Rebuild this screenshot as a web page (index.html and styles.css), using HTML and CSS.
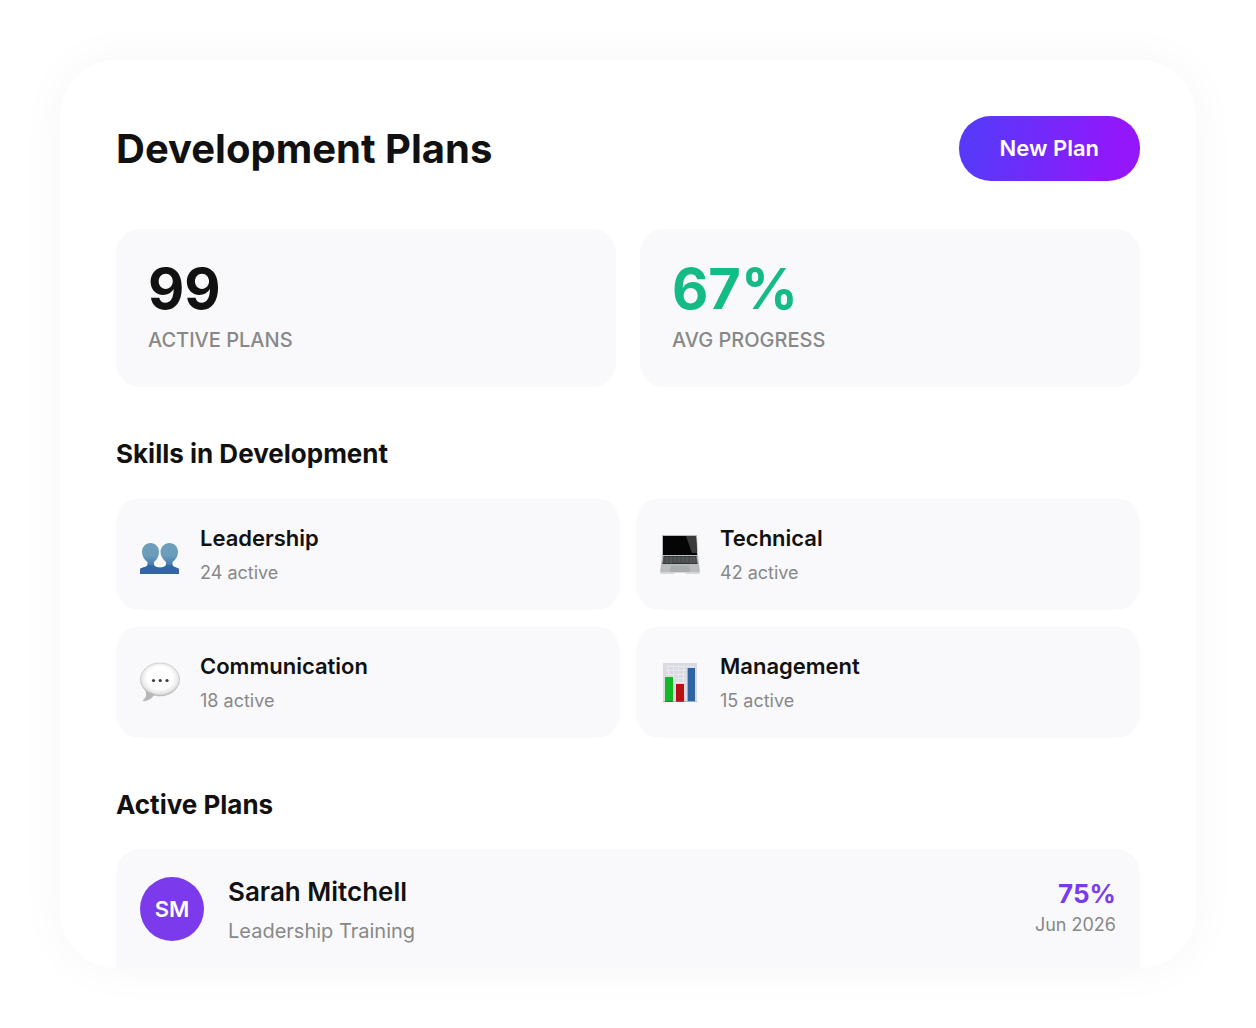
FILE: index.html
```
<!DOCTYPE html>
<html lang="en">
<head>
    <meta charset="UTF-8">
    <meta name="viewport" content="width=device-width, initial-scale=1.0">
    <title>Development Plans</title>
    <link rel="stylesheet" href="styles.css">
</head>
<body>
    <main class="panel">
        <header class="panel-header">
            <h1>Development Plans</h1>
            <button type="button" class="new-plan">New Plan</button>
        </header>

        <section class="stats">
            <div class="stat">
                <div class="stat-value">99</div>
                <div class="stat-label">Active Plans</div>
            </div>
            <div class="stat">
                <div class="stat-value green">67%</div>
                <div class="stat-label">Avg Progress</div>
            </div>
        </section>

        <section>
            <h2>Skills in Development</h2>
            <div class="skills">
                <div class="skill">
                    <svg class="skill-icon" viewBox="0 0 40 42" aria-hidden="true">
                        <defs>
                            <linearGradient id="person" x1="0" y1="0" x2="0" y2="1">
                                <stop offset="0.4" stop-color="#6c9dba"/>
                                <stop offset="0.75" stop-color="#3f78b0"/>
                                <stop offset="1" stop-color="#466995"/>
                            </linearGradient>
                        </defs>
                        <path fill="url(#person)" d="M0 41v-4c0-1 .5-1.600 1.500-2 3-1 6-1.500 6-3.500v-2.500C4 26.500 2 23 2 19 2 14 5.500 10 10.500 10S19 14 19 19c0 4-2 7.500-5 10v2.500c0 2 3 3 6 3 3 0 6-1 6-3V29c-3-2.500-5.500-6-5.500-10 0-5 4-9 9-9s8.500 4 8.500 9c0 4-2 7.500-5.500 10v2.500c0 2 2.500 2.500 5 3.500 1 .4 1.500 1 1.500 2v4z"/>
                        <path fill="#2d62a2" d="M0 41v-4c0-1 .5-1.600 1.500-2 3-1 6-1.500 6-3.500 2 1 4.500 1 6.500 0 0 2 3 3 6 3s6-1 6-3c2 1 4.500 1 6.500 0 0 2 2.500 2.500 5 3.500 1 .4 1.500 1 1.500 2v4z" opacity=".7"/>
                    </svg>
                    <div>
                        <div class="skill-name">Leadership</div>
                        <div class="skill-count">24 active</div>
                    </div>
                </div>
                <div class="skill">
                    <svg class="skill-icon" viewBox="0 0 40 42" aria-hidden="true">
                        <path fill="#b9bcbd" d="M2 2h35l1 20H2z"/>
                        <path fill="#050505" d="M3 3h33l1 19H3z"/>
                        <path fill="#3b3b3b" d="M26 3h10l1 17h-5z"/>
                        <path fill="#b9bdbd" d="M2 22h36l2 17.500H0z"/>
                        <path fill="#303132" d="M3.500 23h33l1 8h-35z"/>
                        <path stroke="#8b8e8f" stroke-width=".6" d="M3 25h34M3 27h34.500M3 29h34.500"/>
                        <path stroke="#707475" stroke-width=".5" d="M7 23v8M11 23v8M15 23v6M19 23v6M23 23v6M27 23v6M31 23v8M34 23v8"/>
                        <path fill="#a9adad" d="M11 32.500h18l1 6.500H10z"/>
                        <path fill="#d4d8d8" d="M0 39h40v1l-1 1H26l-1-1H15l-1 1H1l-1-1z"/>
                    </svg>
                    <div>
                        <div class="skill-name">Technical</div>
                        <div class="skill-count">42 active</div>
                    </div>
                </div>
                <div class="skill">
                    <svg class="skill-icon" viewBox="0 0 40 42" aria-hidden="true">
                        <defs>
                            <radialGradient id="bubble" cx=".5" cy=".45" r=".56">
                                <stop offset="0.6" stop-color="#ffffff"/>
                                <stop offset="0.85" stop-color="#e6e6e7"/>
                                <stop offset="1" stop-color="#acaead"/>
                            </radialGradient>
                        </defs>
                        <ellipse cx="20" cy="18.500" rx="19.500" ry="16.500" fill="url(#bubble)" stroke="#b8b9b9" stroke-width=".6"/>
                        <path fill="#b5b8b7" d="M5.500 30c1.500 4 .5 7-2.500 9-.5.6 0 1.200 1 1.200 4-.2 8.500-3 10.500-6.700z"/>
                        <circle cx="13.500" cy="19.500" r="1.600" fill="#3d3d3d"/>
                        <circle cx="20.200" cy="19.500" r="1.600" fill="#3d3d3d"/>
                        <circle cx="27" cy="19.500" r="1.600" fill="#3d3d3d"/>
                    </svg>
                    <div>
                        <div class="skill-name">Communication</div>
                        <div class="skill-count">18 active</div>
                    </div>
                </div>
                <div class="skill">
                    <svg class="skill-icon" viewBox="0 0 40 42" aria-hidden="true">
                        <path fill="#dadbe2" d="M3 2h34v39H3z"/>
                        <path stroke="#e8e8ee" d="M6 5.500h28M6 9.500h20M6 13.500h20M14 17.500h12M14 21.500h12M8.500 4v10M13.500 4v18M18.500 4v18M23.500 4v18"/>
                        <path fill="#b4b5bd" d="M3 40h34v1H3z"/>
                        <path fill="#12b924" d="M5 16h8v24H5z"/>
                        <path fill="#b71111" d="M16 23h8v17h-8z"/>
                        <path fill="#8fb2cf" d="M27 7h8v34h-8z"/>
                        <path fill="#2e64a4" d="M28 7h7v33h-7z"/>
                        <path fill="#59625e" d="M5 40h8v1H5zM16 40h8v1h-8z"/>
                    </svg>
                    <div>
                        <div class="skill-name">Management</div>
                        <div class="skill-count">15 active</div>
                    </div>
                </div>
            </div>
        </section>

        <section>
            <h2>Active Plans</h2>
            <div class="plan">
                <div class="avatar">SM</div>
                <div class="plan-info">
                    <div class="plan-name">Sarah Mitchell</div>
                    <div class="plan-type">Leadership Training</div>
                </div>
                <div class="plan-status">
                    <div class="plan-percent">75%</div>
                    <div class="plan-date">Jun 2026</div>
                </div>
            </div>
        </section>
    </main>
</body>
</html>
```
FILE: styles.css
```
* {
    box-sizing: border-box;
}
body {
    margin: 0;
    padding: 60px;
    height: 100vh;
    font-family: Inter, "Liberation Sans", sans-serif;
    color: #111;
    background: #fff;
}
.panel {
    height: 100%;
    padding: 56px 56px 0;
    overflow: hidden;
    background: #fff;
    border-radius: 56px;
    box-shadow: 0 0 48px rgba(0, 0, 0, 0.04);
}
.panel-header {
    display: flex;
    justify-content: space-between;
    align-items: center;
    margin-bottom: 48px;
}
h1 {
    margin: 0;
    font-size: 40px;
    line-height: 48px;
    font-weight: 700;
}
h2 {
    margin: 48px 0 25px;
    font-size: 26px;
    line-height: 38px;
    font-weight: 700;
}
.new-plan {
    padding: 18px 41px;
    border: none;
    border-radius: 32px;
    background: linear-gradient(100deg, #5a38fa 12%, #9416fb 88%);
    color: white;
    font-family: inherit;
    font-size: 22px;
    line-height: 29px;
    font-weight: 600;
    cursor: pointer;
}
.stats {
    display: grid;
    grid-template-columns: 1fr 1fr;
    gap: 24px;
}
.stat {
    padding: 32px;
    background: #f9f9fb;
    border-radius: 24px;
}
.stat-value {
    margin-bottom: 8px;
    font-size: 56px;
    line-height: 56px;
    font-weight: 700;
}
.green {
    color: #15bb85;
}
.stat-label {
    color: #888;
    font-size: 20px;
    line-height: 30px;
    font-weight: 500;
    text-transform: uppercase;
}
.skills {
    display: grid;
    grid-template-columns: 1fr 1fr;
    gap: 16px;
}
.skill {
    display: flex;
    align-items: center;
    gap: 20px;
    padding: 24px;
    background: #f9f9fb;
    border-radius: 24px;
}
.skill-icon {
    width: 40px;
    height: 42px;
}
.skill-name {
    margin-bottom: 6px;
    font-size: 22px;
    line-height: 32px;
    font-weight: 600;
}
.skill-count {
    color: #888;
    font-size: 18px;
    line-height: 26px;
}
.plan {
    display: flex;
    align-items: center;
    gap: 24px;
    padding: 24px 24px 56px;
    background: #f9f9fb;
    border-radius: 24px;
}
.avatar {
    display: flex;
    align-items: center;
    justify-content: center;
    width: 64px;
    height: 64px;
    border-radius: 50%;
    background: #7c3aed;
    color: white;
    font-size: 22px;
    font-weight: 600;
}
.plan-info {
    flex: 1;
}
.plan-name {
    margin-bottom: 6px;
    font-size: 26px;
    line-height: 38px;
    font-weight: 600;
}
.plan-type {
    color: #888;
    font-size: 20px;
    line-height: 28px;
}
.plan-status {
    text-align: right;
}
.plan-percent {
    color: #7c3aed;
    font-size: 26px;
    line-height: 32px;
    font-weight: 700;
}
.plan-date {
    color: #888;
    font-size: 18px;
    line-height: 30px;
}
```
